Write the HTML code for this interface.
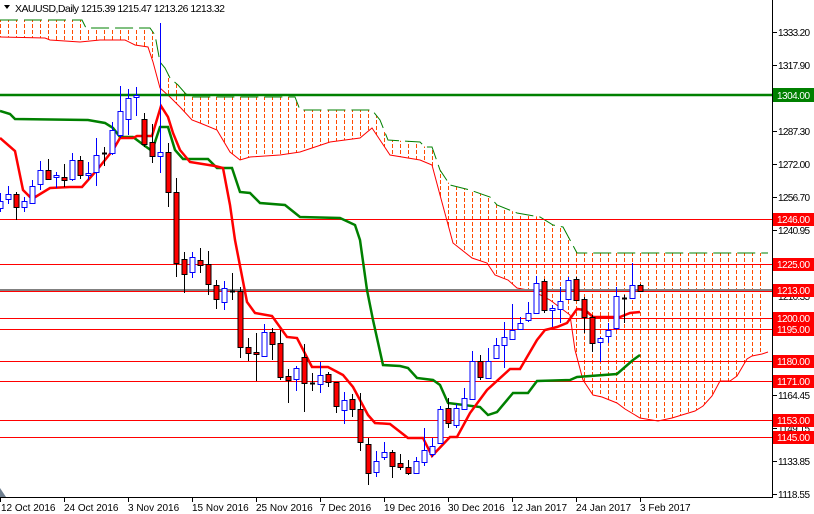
<!DOCTYPE html>
<html><head><meta charset="utf-8"><style>
html,body{margin:0;padding:0;background:#fff;}
svg{display:block;font-family:"Liberation Sans",sans-serif;font-size:10px;}
</style></head><body>
<svg width="814" height="514" viewBox="0 0 814 514" xmlns="http://www.w3.org/2000/svg">
<defs>
<pattern id="h" patternUnits="userSpaceOnUse" x="0" y="0" width="8" height="6">
<rect x="0" y="0" width="1" height="4" fill="#ff4a00"/>
</pattern>
<clipPath id="cc"><polygon points="0,20 82,20 86,28 150,28 155,35 160,62 165,68 170,78 178,85 185,93 190,97 295,97 300,110 372,110 380,120 388,140 420,142 425,147 432,147 440,170 450,185 470,190 490,197 497,205 517,213 540,217 553,225 563,227 577,253 768,253 768,352 762,354 752,356 747,359 737,376 730,381 720,381 712,396 703,406 695,411 672,418 658,421 640,418 625,409 617,403 602,397 593,395 583,380 575,350 570,315 550,300 533,291 517,288 508,280 495,275 487,263 472,258 453,243 440,195 432,165 420,160 390,155 380,140 372,128 360,138 330,142 300,152 280,155 250,157 240,160 230,152 217,130 200,123 192,120 180,107 170,97 160,88 153,62 148,47 135,45 125,40 100,40 80,42 50,40 45,38 0,37"/></clipPath>
</defs>
<rect x="0" y="0" width="814" height="514" fill="#fff"/>
<rect x="0" y="0" width="772" height="497" fill="url(#h)" clip-path="url(#cc)"/>
<polyline fill="none" stroke="#008000" stroke-width="1" points="0,20 82,20 86,28 150,28 155,35 160,62 165,68 170,78 178,85 185,93 190,97 295,97 300,110 372,110 380,120 388,140 420,142 425,147 432,147 440,170 450,185 470,190 490,197 497,205 517,213 540,217 553,225 563,227 577,253 768,253" stroke-dasharray="18 6"/>
<polyline fill="none" stroke="#ff0000" stroke-width="1" points="0,37 45,38 50,40 80,42 100,40 125,40 135,45 148,47 153,62 160,88 170,97 180,107 192,120 200,123 217,130 230,152 240,160 250,157 280,155 300,152 330,142 360,138 372,128 380,140 390,155 420,160 432,165 440,195 453,243 472,258 487,263 495,275 508,280 517,288 533,291 550,300 570,315 575,350 583,380 593,395 602,397 617,403 625,409 640,418 658,421 672,418 695,411 703,406 712,396 720,381 730,381 737,376 747,359 752,356 762,354 768,352"/>
<g stroke-width="1">
<line x1="0" y1="95" x2="772" y2="95" stroke="#008000" stroke-width="2.5"/>
<line x1="0" y1="219.5" x2="772" y2="219.5" stroke="#ff0000"/>
<line x1="0" y1="264.5" x2="772" y2="264.5" stroke="#ff0000"/>
<line x1="0" y1="290" x2="772" y2="290" stroke="#808080" stroke-width="2"/>
<line x1="0" y1="291.5" x2="772" y2="291.5" stroke="#ff0000"/>
<line x1="0" y1="318.5" x2="772" y2="318.5" stroke="#ff0000"/>
<line x1="0" y1="329.5" x2="772" y2="329.5" stroke="#ff0000"/>
<line x1="0" y1="361.5" x2="772" y2="361.5" stroke="#ff0000"/>
<line x1="0" y1="381.5" x2="772" y2="381.5" stroke="#ff0000"/>
<line x1="0" y1="420.5" x2="772" y2="420.5" stroke="#ff0000"/>
<line x1="0" y1="437.5" x2="772" y2="437.5" stroke="#ff0000"/>
</g>
<polyline fill="none" stroke="#008000" stroke-width="2.5" points="0,111 10,114 15,119 88,120 105,123 113,128 120,137 133,137 145,146 152,151 160,127 168,127 175,150 183,159 208,159 217,168 232,168 240,192 250,193 260,203 285,205 300,217 340,218 355,225 360,240 367,290 373,320 383,365 400,366 408,368 417,378 433,380 440,385 448,403 480,407 488,415 497,412 513,393 528,393 537,381 570,380 577,377 617,374 633,360 640,355"/>
<polyline fill="none" stroke="#ff0000" stroke-width="2.5" points="0,138 15,151 23,190 32,199 50,188 70,187 82,187 97,170 113,150 120,138 133,138 137,136 152,136 161,106 168,117 173,133 180,150 190,162 215,166 223,168 230,205 235,240 247,302 255,313 272,316 287,337 297,338 312,367 328,367 343,375 353,387 368,415 375,423 390,424 408,438 423,438 432,456 450,437 457,437 470,413 487,390 510,369 520,369 537,340 545,330 557,327 567,323 577,309 585,310 593,317 620,317 630,313 640,312"/>
<g id="c" stroke-width="1">
<line x1="0.5" y1="193" x2="0.5" y2="212" stroke="#0000ff"/><rect x="-2" y="201.5" width="5" height="7" fill="#fff" stroke="#0000ff"/>
<line x1="8.5" y1="186" x2="8.5" y2="204" stroke="#0000ff"/><rect x="6" y="194.5" width="5" height="5" fill="#fff" stroke="#0000ff"/>
<line x1="16.5" y1="192" x2="16.5" y2="220" stroke="#000"/><rect x="14" y="194.5" width="5" height="13" fill="#ff0000" stroke="#000"/>
<line x1="24.5" y1="197" x2="24.5" y2="212" stroke="#0000ff"/><rect x="22" y="201.5" width="5" height="6" fill="#fff" stroke="#0000ff"/>
<line x1="32.5" y1="180" x2="32.5" y2="204" stroke="#0000ff"/><rect x="30" y="186.5" width="5" height="17" fill="#fff" stroke="#0000ff"/>
<line x1="40.5" y1="161" x2="40.5" y2="190" stroke="#0000ff"/><rect x="38" y="170.5" width="5" height="14" fill="#fff" stroke="#0000ff"/>
<line x1="48.5" y1="159" x2="48.5" y2="180" stroke="#000"/><rect x="46" y="170.5" width="5" height="9" fill="#ff0000" stroke="#000"/>
<line x1="56.5" y1="172" x2="56.5" y2="188" stroke="#0000ff"/><rect x="54" y="175.5" width="5" height="2" fill="#fff" stroke="#0000ff"/>
<line x1="64.5" y1="164" x2="64.5" y2="187" stroke="#000"/><rect x="62" y="177.5" width="5" height="3" fill="#ff0000" stroke="#000"/>
<line x1="72.5" y1="153" x2="72.5" y2="181" stroke="#0000ff"/><rect x="70" y="160.5" width="5" height="19" fill="#fff" stroke="#0000ff"/>
<line x1="80.5" y1="156" x2="80.5" y2="179" stroke="#000"/><rect x="78" y="160.5" width="5" height="15" fill="#ff0000" stroke="#000"/>
<line x1="88.5" y1="162" x2="88.5" y2="180" stroke="#0000ff"/><rect x="86" y="173.5" width="5" height="2" fill="#fff" stroke="#0000ff"/>
<line x1="96.5" y1="138" x2="96.5" y2="186" stroke="#0000ff"/><rect x="94" y="155.5" width="5" height="17" fill="#fff" stroke="#0000ff"/>
<line x1="104.5" y1="147" x2="104.5" y2="166" stroke="#000"/><line x1="102" y1="153.5" x2="107" y2="153.5" stroke="#000" stroke-width="2"/>
<line x1="112.5" y1="122" x2="112.5" y2="155" stroke="#0000ff"/><rect x="110" y="130.5" width="5" height="23" fill="#fff" stroke="#0000ff"/>
<line x1="120.5" y1="86" x2="120.5" y2="138" stroke="#0000ff"/><rect x="118" y="111.5" width="5" height="24" fill="#fff" stroke="#0000ff"/>
<line x1="128.5" y1="89" x2="128.5" y2="135" stroke="#0000ff"/><rect x="126" y="98.5" width="5" height="21" fill="#fff" stroke="#0000ff"/>
<line x1="136.5" y1="87" x2="136.5" y2="116" stroke="#0000ff"/><rect x="134" y="95.5" width="5" height="2" fill="#fff" stroke="#0000ff"/>
<line x1="144.5" y1="113" x2="144.5" y2="147" stroke="#000"/><rect x="142" y="119.5" width="5" height="25" fill="#ff0000" stroke="#000"/>
<line x1="152.5" y1="124" x2="152.5" y2="163" stroke="#000"/><rect x="150" y="142.5" width="5" height="14" fill="#ff0000" stroke="#000"/>
<line x1="160.5" y1="23" x2="160.5" y2="173" stroke="#0000ff"/><rect x="158" y="152.5" width="5" height="4" fill="#fff" stroke="#0000ff"/>
<line x1="168.5" y1="143" x2="168.5" y2="207" stroke="#000"/><rect x="166" y="152.5" width="5" height="40" fill="#ff0000" stroke="#000"/>
<line x1="176.5" y1="178" x2="176.5" y2="277" stroke="#000"/><rect x="174" y="192.5" width="5" height="71" fill="#ff0000" stroke="#000"/>
<line x1="184.5" y1="252" x2="184.5" y2="293" stroke="#000"/><rect x="182" y="259.5" width="5" height="15" fill="#ff0000" stroke="#000"/>
<line x1="192.5" y1="252" x2="192.5" y2="278" stroke="#0000ff"/><rect x="190" y="257.5" width="5" height="15" fill="#fff" stroke="#0000ff"/>
<line x1="200.5" y1="248" x2="200.5" y2="273" stroke="#000"/><rect x="198" y="260.5" width="5" height="5" fill="#ff0000" stroke="#000"/>
<line x1="208.5" y1="251" x2="208.5" y2="295" stroke="#000"/><rect x="206" y="264.5" width="5" height="20" fill="#ff0000" stroke="#000"/>
<line x1="216.5" y1="280" x2="216.5" y2="309" stroke="#000"/><rect x="214" y="285.5" width="5" height="14" fill="#ff0000" stroke="#000"/>
<line x1="224.5" y1="281" x2="224.5" y2="310" stroke="#0000ff"/><rect x="222" y="288.5" width="5" height="14" fill="#fff" stroke="#0000ff"/>
<line x1="232.5" y1="273" x2="232.5" y2="300" stroke="#000"/><line x1="230" y1="291.5" x2="235" y2="291.5" stroke="#000" stroke-width="2"/>
<line x1="240.5" y1="287" x2="240.5" y2="358" stroke="#000"/><rect x="238" y="291.5" width="5" height="56" fill="#ff0000" stroke="#000"/>
<line x1="248.5" y1="338" x2="248.5" y2="361" stroke="#000"/><rect x="246" y="347.5" width="5" height="6" fill="#ff0000" stroke="#000"/>
<line x1="256.5" y1="333" x2="256.5" y2="381" stroke="#000"/><rect x="254" y="352.5" width="5" height="2" fill="#ff0000" stroke="#000"/>
<line x1="264.5" y1="324" x2="264.5" y2="357" stroke="#0000ff"/><rect x="262" y="332.5" width="5" height="24" fill="#fff" stroke="#0000ff"/>
<line x1="272.5" y1="328" x2="272.5" y2="360" stroke="#000"/><rect x="270" y="332.5" width="5" height="12" fill="#ff0000" stroke="#000"/>
<line x1="280.5" y1="330" x2="280.5" y2="380" stroke="#000"/><rect x="278" y="343.5" width="5" height="34" fill="#ff0000" stroke="#000"/>
<line x1="288.5" y1="369" x2="288.5" y2="403" stroke="#000"/><rect x="286" y="376.5" width="5" height="4" fill="#ff0000" stroke="#000"/>
<line x1="296.5" y1="366" x2="296.5" y2="391" stroke="#0000ff"/><rect x="294" y="368.5" width="5" height="11" fill="#fff" stroke="#0000ff"/>
<line x1="304.5" y1="344" x2="304.5" y2="412" stroke="#000"/><rect x="302" y="357.5" width="5" height="26" fill="#ff0000" stroke="#000"/>
<line x1="312.5" y1="373" x2="312.5" y2="391" stroke="#000"/><line x1="310" y1="383.5" x2="315" y2="383.5" stroke="#000" stroke-width="2"/>
<line x1="320.5" y1="362" x2="320.5" y2="393" stroke="#0000ff"/><rect x="318" y="375.5" width="5" height="9" fill="#fff" stroke="#0000ff"/>
<line x1="328.5" y1="372" x2="328.5" y2="387" stroke="#000"/><rect x="326" y="374.5" width="5" height="8" fill="#ff0000" stroke="#000"/>
<line x1="336.5" y1="382" x2="336.5" y2="413" stroke="#000"/><rect x="334" y="382.5" width="5" height="24" fill="#ff0000" stroke="#000"/>
<line x1="344.5" y1="392" x2="344.5" y2="424" stroke="#0000ff"/><rect x="342" y="400.5" width="5" height="10" fill="#fff" stroke="#0000ff"/>
<line x1="352.5" y1="394" x2="352.5" y2="417" stroke="#000"/><rect x="350" y="399.5" width="5" height="10" fill="#ff0000" stroke="#000"/>
<line x1="360.5" y1="393" x2="360.5" y2="451" stroke="#000"/><rect x="358" y="409.5" width="5" height="33" fill="#ff0000" stroke="#000"/>
<line x1="368.5" y1="438" x2="368.5" y2="485" stroke="#000"/><rect x="366" y="444.5" width="5" height="29" fill="#ff0000" stroke="#000"/>
<line x1="376.5" y1="451" x2="376.5" y2="477" stroke="#0000ff"/><rect x="374" y="461.5" width="5" height="11" fill="#fff" stroke="#0000ff"/>
<line x1="384.5" y1="442" x2="384.5" y2="460" stroke="#0000ff"/><rect x="382" y="452.5" width="5" height="5" fill="#fff" stroke="#0000ff"/>
<line x1="392.5" y1="450" x2="392.5" y2="478" stroke="#000"/><rect x="390" y="452.5" width="5" height="14" fill="#ff0000" stroke="#000"/>
<line x1="400.5" y1="454" x2="400.5" y2="470" stroke="#000"/><rect x="398" y="463.5" width="5" height="4" fill="#ff0000" stroke="#000"/>
<line x1="408.5" y1="460" x2="408.5" y2="475" stroke="#000"/><rect x="406" y="467.5" width="5" height="6" fill="#ff0000" stroke="#000"/>
<line x1="416.5" y1="457" x2="416.5" y2="473" stroke="#0000ff"/><rect x="414" y="461.5" width="5" height="12" fill="#fff" stroke="#0000ff"/>
<line x1="424.5" y1="428" x2="424.5" y2="466" stroke="#0000ff"/><rect x="422" y="450.5" width="5" height="12" fill="#fff" stroke="#0000ff"/>
<line x1="432.5" y1="438" x2="432.5" y2="457" stroke="#0000ff"/><rect x="430" y="446.5" width="5" height="8" fill="#fff" stroke="#0000ff"/>
<line x1="440.5" y1="406" x2="440.5" y2="443" stroke="#0000ff"/><rect x="438" y="409.5" width="5" height="34" fill="#fff" stroke="#0000ff"/>
<line x1="448.5" y1="398" x2="448.5" y2="428" stroke="#000"/><rect x="446" y="408.5" width="5" height="15" fill="#ff0000" stroke="#000"/>
<line x1="456.5" y1="404" x2="456.5" y2="428" stroke="#0000ff"/><rect x="454" y="408.5" width="5" height="17" fill="#fff" stroke="#0000ff"/>
<line x1="464.5" y1="388" x2="464.5" y2="410" stroke="#0000ff"/><rect x="462" y="398.5" width="5" height="11" fill="#fff" stroke="#0000ff"/>
<line x1="472.5" y1="351" x2="472.5" y2="400" stroke="#0000ff"/><rect x="470" y="361.5" width="5" height="38" fill="#fff" stroke="#0000ff"/>
<line x1="480.5" y1="355" x2="480.5" y2="380" stroke="#000"/><rect x="478" y="361.5" width="5" height="16" fill="#ff0000" stroke="#000"/>
<line x1="488.5" y1="348" x2="488.5" y2="378" stroke="#0000ff"/><rect x="486" y="361.5" width="5" height="17" fill="#fff" stroke="#0000ff"/>
<line x1="496.5" y1="338" x2="496.5" y2="358" stroke="#0000ff"/><rect x="494" y="345.5" width="5" height="13" fill="#fff" stroke="#0000ff"/>
<line x1="504.5" y1="322" x2="504.5" y2="368" stroke="#0000ff"/><rect x="502" y="337.5" width="5" height="8" fill="#fff" stroke="#0000ff"/>
<line x1="512.5" y1="304" x2="512.5" y2="339" stroke="#0000ff"/><rect x="510" y="330.5" width="5" height="9" fill="#fff" stroke="#0000ff"/>
<line x1="520.5" y1="317" x2="520.5" y2="330" stroke="#0000ff"/><rect x="518" y="323.5" width="5" height="6" fill="#fff" stroke="#0000ff"/>
<line x1="528.5" y1="302" x2="528.5" y2="322" stroke="#0000ff"/><rect x="526" y="313.5" width="5" height="7" fill="#fff" stroke="#0000ff"/>
<line x1="536.5" y1="276" x2="536.5" y2="313" stroke="#0000ff"/><rect x="534" y="283.5" width="5" height="30" fill="#fff" stroke="#0000ff"/>
<line x1="544.5" y1="279" x2="544.5" y2="313" stroke="#000"/><rect x="542" y="281.5" width="5" height="29" fill="#ff0000" stroke="#000"/>
<line x1="552.5" y1="305" x2="552.5" y2="327" stroke="#0000ff"/><rect x="550" y="308.5" width="5" height="2" fill="#fff" stroke="#0000ff"/>
<line x1="560.5" y1="287" x2="560.5" y2="323" stroke="#0000ff"/><rect x="558" y="301.5" width="5" height="8" fill="#fff" stroke="#0000ff"/>
<line x1="568.5" y1="277" x2="568.5" y2="300" stroke="#0000ff"/><rect x="566" y="280.5" width="5" height="19" fill="#fff" stroke="#0000ff"/>
<line x1="576.5" y1="277" x2="576.5" y2="300" stroke="#000"/><rect x="574" y="279.5" width="5" height="21" fill="#ff0000" stroke="#000"/>
<line x1="584.5" y1="297" x2="584.5" y2="333" stroke="#000"/><rect x="582" y="299.5" width="5" height="18" fill="#ff0000" stroke="#000"/>
<line x1="592.5" y1="315" x2="592.5" y2="352" stroke="#000"/><rect x="590" y="317.5" width="5" height="26" fill="#ff0000" stroke="#000"/>
<line x1="600.5" y1="337" x2="600.5" y2="362" stroke="#0000ff"/><rect x="598" y="338.5" width="5" height="4" fill="#fff" stroke="#0000ff"/>
<line x1="608.5" y1="323" x2="608.5" y2="343" stroke="#0000ff"/><rect x="606" y="330.5" width="5" height="6" fill="#fff" stroke="#0000ff"/>
<line x1="616.5" y1="287" x2="616.5" y2="330" stroke="#0000ff"/><rect x="614" y="296.5" width="5" height="32" fill="#fff" stroke="#0000ff"/>
<line x1="624.5" y1="295" x2="624.5" y2="323" stroke="#000"/><line x1="622" y1="298.5" x2="627" y2="298.5" stroke="#000" stroke-width="2"/>
<line x1="632.5" y1="263" x2="632.5" y2="298" stroke="#0000ff"/><rect x="630" y="285.5" width="5" height="13" fill="#fff" stroke="#0000ff"/>
<line x1="640.5" y1="284" x2="640.5" y2="292" stroke="#000"/><rect x="638" y="285.5" width="5" height="6" fill="#ff0000" stroke="#000"/>
</g>
<rect x="772" y="0" width="1" height="498" fill="#000"/>
<rect x="0" y="497" width="773" height="1" fill="#000"/>
<polygon points="0,488 6,497 0,497" fill="#708090"/>
<g fill="#000">
<rect x="773" y="32" width="4" height="1"/><rect x="773" y="65" width="4" height="1"/><rect x="773" y="131" width="4" height="1"/><rect x="773" y="164" width="4" height="1"/><rect x="773" y="197" width="4" height="1"/><rect x="773" y="230" width="4" height="1"/><rect x="773" y="296" width="4" height="1"/><rect x="773" y="395" width="4" height="1"/><rect x="773" y="428" width="4" height="1"/><rect x="773" y="461" width="4" height="1"/><rect x="773" y="494" width="4" height="1"/>
<rect x="0" y="497" width="1" height="5"/><rect x="64" y="497" width="1" height="5"/><rect x="128" y="497" width="1" height="5"/><rect x="192" y="497" width="1" height="5"/><rect x="256" y="497" width="1" height="5"/><rect x="320" y="497" width="1" height="5"/><rect x="384" y="497" width="1" height="5"/><rect x="448" y="497" width="1" height="5"/><rect x="512" y="497" width="1" height="5"/><rect x="576" y="497" width="1" height="5"/><rect x="640" y="497" width="1" height="5"/>
</g>
<g fill="#000" font-size="10">
<text x="778" y="36" textLength="32">1333.20</text><text x="778" y="69" textLength="32">1317.90</text><text x="778" y="102" textLength="32">1302.60</text><text x="778" y="135" textLength="32">1287.30</text><text x="778" y="168" textLength="32">1272.00</text><text x="778" y="201" textLength="32">1256.70</text><text x="778" y="234" textLength="32">1240.95</text><text x="778" y="300" textLength="32">1210.35</text><text x="778" y="399" textLength="32">1164.45</text><text x="778" y="432" textLength="32">1149.15</text><text x="778" y="465" textLength="32">1133.85</text><text x="778" y="498" textLength="32">1118.55</text>
</g>
<g font-size="10" fill="#fff">
<rect x="773" y="88" width="41" height="14" fill="#008000"/><text x="777" y="99" textLength="33">1304.00</text>
<rect x="773" y="213" width="41" height="13" fill="#ff0000"/><text x="777" y="223" textLength="33">1246.00</text>
<rect x="773" y="258" width="41" height="13" fill="#ff0000"/><text x="777" y="268" textLength="33">1225.00</text>
<rect x="773" y="284" width="41" height="13" fill="#ff0000"/><text x="777" y="294" textLength="33">1213.00</text>
<rect x="773" y="312" width="41" height="13" fill="#ff0000"/><text x="777" y="322" textLength="33">1200.00</text>
<rect x="773" y="323" width="41" height="13" fill="#ff0000"/><text x="777" y="333" textLength="33">1195.00</text>
<rect x="773" y="355" width="41" height="13" fill="#ff0000"/><text x="777" y="365" textLength="33">1180.00</text>
<rect x="773" y="375" width="41" height="13" fill="#ff0000"/><text x="777" y="385" textLength="33">1171.00</text>
<rect x="773" y="414" width="41" height="13" fill="#ff0000"/><text x="777" y="424" textLength="33">1153.00</text>
<rect x="773" y="431" width="41" height="13" fill="#ff0000"/><text x="777" y="441" textLength="33">1145.00</text>
</g>
<g fill="#000" font-size="10">
<text x="1" y="511">12 Oct 2016</text><text x="64" y="511">24 Oct 2016</text><text x="128" y="511">3 Nov 2016</text><text x="192" y="511">15 Nov 2016</text><text x="256" y="511">25 Nov 2016</text><text x="320" y="511">7 Dec 2016</text><text x="384" y="511">19 Dec 2016</text><text x="448" y="511">30 Dec 2016</text><text x="512" y="511">12 Jan 2017</text><text x="576" y="511">24 Jan 2017</text><text x="640" y="511">3 Feb 2017</text>
</g>
<polygon points="4,5 10,5 7,9" fill="#000"/>
<text x="15" y="12" font-size="10.5" fill="#000" textLength="210">XAUUSD,Daily  1215.39 1215.47 1213.26 1213.32</text>
</svg>
</body></html>
